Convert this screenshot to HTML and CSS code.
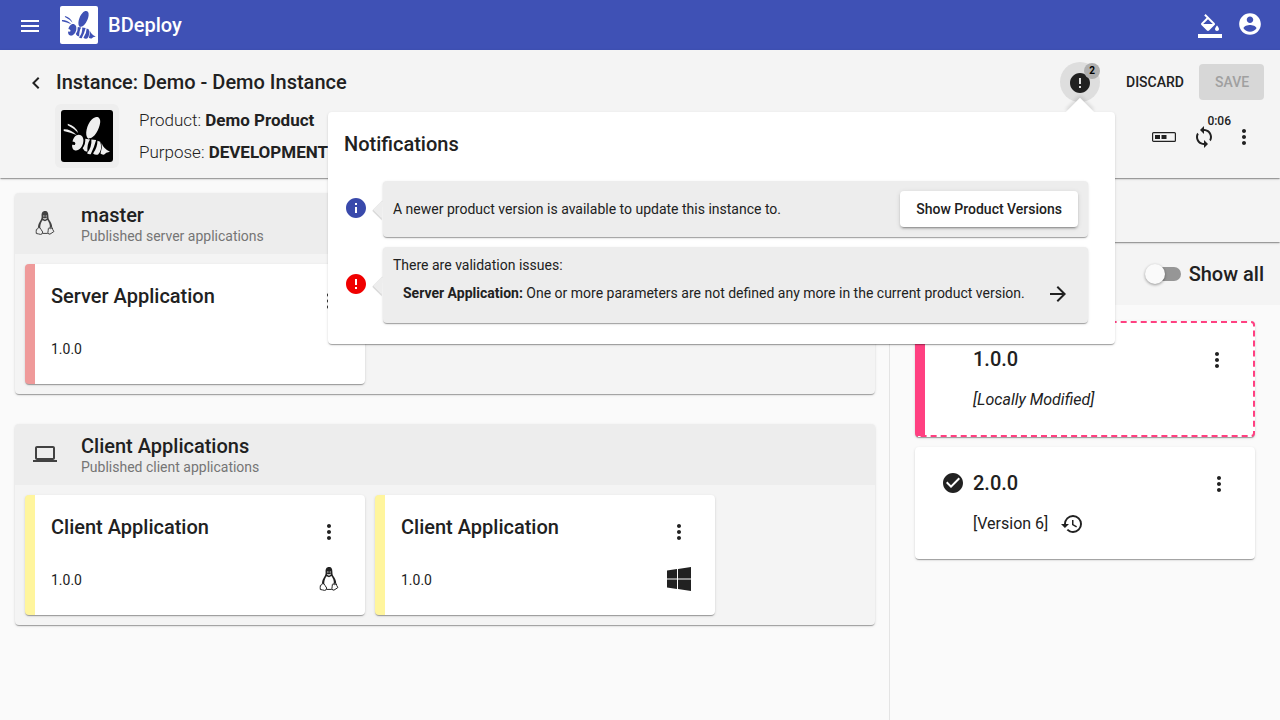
FILE: index.html
```html
<!DOCTYPE html>
<html lang="en">
<head>
<meta charset="utf-8">
<meta name="viewport" content="width=device-width, initial-scale=1">
<title>BDeploy</title>
<link rel="stylesheet" href="styles.css">
</head>
<body>
<svg class="defs" aria-hidden="true">
  <symbol id="bee" viewBox="0 0 154 154">
    <path d="M81 85C68 76 77 42 91 28C103 15 118 19 116 37C114 57 98 84 84 84Z"/>
    <path d="M8 57Q28 56 46 74Q28 66 8 62ZM20 41Q44 48 51 68Q38 54 20 45Z"/>
    <path d="M46 75C58 69 69 80 66 95C64 109 53 122 42 120C34 118 32 110 33 103L41 104Q45 98 40 95L34 93C36 86 40 78 46 75Z"/>
    <path d="M72 85L86 87Q77 100 78 124Q68 122 64 113Q73 102 72 85Z"/>
    <path d="M90 87L104 89Q98 112 88 131Q82 132 77 128Q92 108 90 87Z"/>
    <path d="M108 91L116 94Q124 116 110 132Q101 134 95 129Q108 111 108 91Z"/>
    <path d="M120 98Q126 115 145 124Q132 126 128 132Q121 133 117 129Q123 114 120 98Z"/>
  </symbol>
  <symbol id="menu" viewBox="0 0 24 24"><path d="M3 18h18v-2H3v2zm0-5h18v-2H3v2zm0-7v2h18V6H3z"/></symbol>
  <symbol id="more" viewBox="0 0 24 24"><path d="M12 8c1.100 0 2-.9 2-2s-.9-2-2-2-2 .9-2 2 .9 2 2 2zm0 2c-1.100 0-2 .9-2 2s.9 2 2 2 2-.9 2-2-.9-2-2-2zm0 6c-1.100 0-2 .9-2 2s.9 2 2 2 2-.9 2-2-.9-2-2-2z"/></symbol>
  <symbol id="error" viewBox="0 0 24 24"><path d="M12 2C6.480 2 2 6.480 2 12s4.480 10 10 10 10-4.480 10-10S17.520 2 12 2zm1 15h-2v-2h2v2zm0-4h-2V7h2v6z"/></symbol>
  <symbol id="info" viewBox="0 0 24 24"><path d="M12 2C6.480 2 2 6.480 2 12s4.480 10 10 10 10-4.480 10-10S17.520 2 12 2zm1 15h-2v-6h2v6zm0-8h-2V7h2v2z"/></symbol>
  <symbol id="tux" viewBox="0 0 24 24">
    <path d="M12 0C9.300 0 8.400 2.200 8.600 5C8.700 7 8.200 8.400 7 10.200C5.800 12 5.100 14 5 16L7.300 17.500C7 14 8 11.500 9.500 9.200L12 10.300L14.500 9C16.200 11.500 17.200 14 16.700 17L19.200 16.400C19.200 13.500 17.900 11 16.500 9.200C15.500 7.800 15.400 6.500 15.400 5C15.400 2 14.700 0 12 0ZM10.800 4.200Q11.600 4.300 11.500 5.500L10.200 5.600Q10.200 4.500 10.800 4.200ZM13.200 4.200Q13.900 4.400 13.900 5.600L12.600 5.500Q12.500 4.400 13.200 4.200ZM10.200 6.700L12 7.600L13.900 6.600L13.600 7.700L12 8.700L10.300 7.700Z" fill-rule="evenodd"/>
    <path d="M5.500 16.200Q7 16.400 8 18.400L9.700 21Q9.700 23.400 7.600 23.400Q5.600 22.900 3.300 22.500Q3 20.500 3.400 18.400Q5 18.300 5.500 16.200ZM15.400 17.500Q15.100 20 14.900 21.700Q15.400 23.600 17 23.100Q19 21.900 20.900 20.500Q19.500 18.800 19.300 16.800Q17.300 18.500 15.900 16.800ZM9.700 22.400L14.800 22.400" fill="none" stroke="currentColor"/>
  </symbol>
</svg>

<header class="appbar">
  <button class="icon-btn low" aria-label="Menu"><svg class="icon"><use href="#menu"/></svg></button>
  <span class="brand-logo"><svg><use href="#bee"/></svg></span>
  <span class="brand">BDeploy</span>
  <div class="appbar-actions">
    <button class="icon-btn low" aria-label="Theme"><svg class="icon" viewBox="0 0 24 24"><path d="M16.560 8.940L7.620 0 6.210 1.410l2.380 2.380-5.150 5.150a1.490 1.490 0 0 0 0 2.120l5.500 5.500c.29.29.68.44 1.060.44s.77-.15 1.060-.44l5.500-5.500c.59-.58.59-1.530 0-2.120zM5.210 10L10 5.210 14.790 10H5.210zM19 11.500s-2 2.170-2 3.500c0 1.100.9 2 2 2s2-.9 2-2c0-1.330-2-3.500-2-3.500zM0 20h24v4H0z"/></svg></button>
    <button class="icon-btn account" aria-label="Account"><svg class="icon icon-account" viewBox="0 0 24 24"><path d="M12 2C6.480 2 2 6.480 2 12s4.480 10 10 10 10-4.480 10-10S17.520 2 12 2zm0 3c1.660 0 3 1.340 3 3s-1.340 3-3 3-3-1.340-3-3 1.340-3 3-3zm0 14.200c-2.500 0-4.710-1.280-6-3.220.03-1.990 4-3.080 6-3.080 1.990 0 5.970 1.090 6 3.080-1.290 1.940-3.500 3.220-6 3.220z"/></svg></button>
  </div>
</header>

<section class="toolbar">
  <div class="toolbar-row">
    <button class="back" aria-label="Back"><svg class="icon" viewBox="0 0 24 24"><path d="M15.410 7.410L14 6l-6 6 6 6 1.410-1.410L10.830 12z"/></svg></button>
    <h1 class="title">Instance: Demo - Demo Instance</h1>
    <div class="actions">
      <div class="bell-anchor">
        <button class="icon-btn low bell" aria-label="Notifications"><svg class="icon"><use href="#error"/></svg><span class="badge">2</span></button>
        <div class="popup" role="dialog" aria-labelledby="popup-title">
          <h2 class="title popup-title" id="popup-title">Notifications</h2>
          <div class="notice">
            <svg class="icon blue"><use href="#info"/></svg>
            <div class="bubble bubble-row">
              <span>A newer product version is available to update this instance to.</span>
              <button class="btn raised">Show Product Versions</button>
            </div>
          </div>
          <div class="notice">
            <svg class="icon red"><use href="#error"/></svg>
            <div class="bubble bubble-list">
              <p class="issue-title">There are validation issues:</p>
              <div class="issue">
                <span><b>Server Application:</b> One or more parameters are not defined any more in the current product version.</span>
                <button class="icon-btn low" aria-label="Go to issue"><svg class="icon" viewBox="0 0 24 24"><path d="M12 4l-1.410 1.410L16.170 11H4v2h12.170l-5.580 5.590L12 20l8-8z"/></svg></button>
              </div>
            </div>
          </div>
        </div>
      </div>
      <button class="btn discard">DISCARD</button>
      <button class="btn save" disabled>SAVE</button>
    </div>
  </div>
  <div class="toolbar-row product-row">
    <div class="product-logo"><span><svg><use href="#bee"/></svg></span></div>
    <div class="product-info">
      <p>Product: <b>Demo Product</b></p>
      <p>Purpose: <b>DEVELOPMENT</b></p>
    </div>
    <div class="actions">
      <button class="icon-btn low" aria-label="Process state"><svg class="icon" viewBox="0 0 24 24"><rect x=".6" y="7.600" width="22.800" height="8.800" rx="1" fill="none" stroke="currentColor" stroke-width="1.200"/><path d="M3 10h5v4H3zM9.500 10h5v4h-5z"/></svg></button>
      <button class="icon-btn low sync" aria-label="Refresh"><svg class="icon" viewBox="0 0 24 24"><path d="M12 4V1L8 5l4 4V6c3.310 0 6 2.690 6 6 0 1.010-.25 1.970-.7 2.800l1.460 1.460A7.930 7.930 0 0 0 20 12c0-4.420-3.580-8-8-8zm0 14c-3.310 0-6-2.690-6-6 0-1.010.25-1.970.7-2.800L5.240 7.740A7.930 7.930 0 0 0 4 12c0 4.420 3.580 8 8 8v3l4-4-4-4v3z"/></svg><span class="timer">0:06</span></button>
      <button class="icon-btn low" aria-label="More"><svg class="icon"><use href="#more"/></svg></button>
    </div>
  </div>
</section>

<main class="content">
  <section class="nodes">
    <article class="group">
      <header class="group-head">
        <svg class="icon"><use href="#tux"/></svg>
        <div>
          <h2 class="title">master</h2>
          <p class="subtitle">Published server applications</p>
        </div>
      </header>
      <div class="cards">
        <div class="card card-red">
          <div class="card-top"><h3 class="title">Server Application</h3><button class="icon-btn" aria-label="More"><svg class="icon"><use href="#more"/></svg></button></div>
          <div class="card-bottom"><span>1.0.0</span></div>
        </div>
      </div>
    </article>
    <article class="group">
      <header class="group-head">
        <svg class="icon" viewBox="0 0 24 24"><path d="M20 18c1.100 0 2-.9 2-2V6c0-1.100-.9-2-2-2H4c-1.100 0-2 .9-2 2v10c0 1.100.9 2 2 2H0v2h24v-2h-4zM4 6h16v10H4V6z"/></svg>
        <div>
          <h2 class="title">Client Applications</h2>
          <p class="subtitle">Published client applications</p>
        </div>
      </header>
      <div class="cards">
        <div class="card card-yellow">
          <div class="card-top"><h3 class="title">Client Application</h3><button class="icon-btn" aria-label="More"><svg class="icon"><use href="#more"/></svg></button></div>
          <div class="card-bottom"><span>1.0.0</span><svg class="icon"><use href="#tux"/></svg></div>
        </div>
        <div class="card card-yellow">
          <div class="card-top"><h3 class="title">Client Application</h3><button class="icon-btn" aria-label="More"><svg class="icon"><use href="#more"/></svg></button></div>
          <div class="card-bottom"><span>1.0.0</span><svg class="icon" viewBox="0 0 24 24"><path d="M0 3.500L10 2v9.500H0zM11 1.900L24 0v11.500H11zM0 12.500h10V22L0 20.500zM11 12.500h13V24l-13-1.900z"/></svg></div>
        </div>
      </div>
    </article>
  </section>

  <aside class="side">
    <div class="side-head"></div>
    <div class="side-filter">
      <input class="toggle" type="checkbox" id="show-all">
      <label class="title" for="show-all">Show all</label>
    </div>
    <div class="versions">
      <div class="version modified">
        <div class="version-main">
          <h3 class="title">1.0.0</h3>
          <p class="version-tag"><i>[Locally Modified]</i></p>
        </div>
        <button class="icon-btn low" aria-label="More"><svg class="icon"><use href="#more"/></svg></button>
      </div>
      <div class="version">
        <svg class="icon" viewBox="0 0 24 24"><path d="M12 2C6.480 2 2 6.480 2 12s4.480 10 10 10 10-4.480 10-10S17.520 2 12 2zm-2 15l-5-5 1.410-1.410L10 14.170l7.590-7.590L19 8l-9 9z"/></svg>
        <div class="version-main">
          <h3 class="title">2.0.0</h3>
          <p class="version-tag">[Version 6] <svg class="icon" viewBox="0 0 24 24"><path d="M13 3a9 9 0 0 0-9 9H1l3.890 3.890.07.14L9 12H6c0-3.870 3.130-7 7-7s7 3.130 7 7-3.130 7-7 7c-1.930 0-3.680-.79-4.940-2.060l-1.420 1.420A8.954 8.954 0 0 0 13 21a9 9 0 0 0 0-18zm-1 5v5l4.280 2.540.72-1.210-3.500-2.080V8H12z"/></svg></p>
        </div>
        <button class="icon-btn low" aria-label="More"><svg class="icon"><use href="#more"/></svg></button>
      </div>
    </div>
  </aside>
</main>
</body>
</html>
```
FILE: styles.css
```css
* { box-sizing: border-box; }

:root {
  --text: #212121;
  --shadow: 0 2px 1px -1px rgba(0, 0, 0, .2), 0 1px 1px 0 rgba(0, 0, 0, .14), 0 1px 3px 0 rgba(0, 0, 0, .12);
}

body {
  margin: 0;
  min-height: 100vh;
  display: flex;
  flex-direction: column;
  background: #fafafa;
  color: var(--text);
  font: 14px/20px Roboto, "Liberation Sans", sans-serif;
}

h1, h2, h3, p { margin: 0; }
b { font-weight: 700; }

button {
  font: inherit;
  color: inherit;
  background: none;
  border: 0;
  padding: 0;
}

.defs { position: absolute; width: 0; height: 0; }
.icon { width: 24px; height: 24px; fill: currentColor; flex: none; display: block; }
.title { font-size: 20px; line-height: 32px; font-weight: 500; }

.icon-btn {
  width: 40px;
  height: 40px;
  flex: none;
  display: flex;
  align-items: center;
  justify-content: center;
  border-radius: 50%;
}
.low { padding-top: 2px; }

.btn {
  height: 36px;
  padding: 0 16px;
  border-radius: 4px;
  font-weight: 500;
  white-space: nowrap;
}

.appbar {
  height: 50px;
  display: flex;
  align-items: center;
  padding: 0 10px;
  background: #3f51b5;
  color: #fff;
}

.brand-logo {
  width: 38px;
  height: 38px;
  margin: 0 10px;
  border-radius: 2px;
  background: #fff;
  color: #3f51b5;
}
.brand-logo svg { width: 38px; height: 38px; fill: currentColor; display: block; }
.brand { font-size: 20px; font-weight: 500; }
.appbar-actions { margin-left: auto; display: flex; }
.account { align-items: flex-start; padding-top: 6px; }
.icon-account { width: 26px; height: 26px; }

.toolbar {
  position: relative;
  z-index: 2;
  display: flex;
  flex-direction: column;
  gap: 2px;
  padding: 12px 16px 10px 24px;
  background: #f4f4f4;
  box-shadow: var(--shadow);
}
.toolbar-row { display: flex; align-items: center; gap: 8px; }
.toolbar-row .title { line-height: 40px; }
.back { padding-top: 2px; }
.actions { margin-left: auto; display: flex; align-items: center; }

.bell-anchor { position: relative; margin-right: 10px; }
.bell { position: relative; background: #dedede; }
.badge {
  position: absolute;
  top: 1px;
  right: 0;
  width: 16px;
  height: 16px;
  border-radius: 50%;
  background: #b0b0b0;
  color: #000;
  font-size: 10px;
  line-height: 16px;
  font-weight: 700;
  text-align: center;
}
.discard { width: 89px; }
.save { width: 65px; background: #d7d7d7; color: #a0a0a0; }

.product-row { padding-left: 31px; gap: 20px; }
.product-logo {
  width: 64px;
  height: 64px;
  padding: 6px;
  border-radius: 6px;
  background: #eee;
}
.product-logo span { display: block; border-radius: 3px; background: #000; color: #eee; }
.product-logo svg { display: block; width: 52px; height: 52px; fill: currentColor; }
.product-info { font-size: 17px; line-height: 32px; font-weight: 300; }
.sync { position: relative; }
.timer {
  position: absolute;
  top: -5px;
  right: -7px;
  font-size: 12px;
  line-height: 20px;
  font-weight: 500;
}

.popup {
  position: absolute;
  top: 50px;
  right: -15px;
  width: 787px;
  padding: 16px 27px 21px 16px;
  border-radius: 4px;
  background: #fff;
  box-shadow: var(--shadow);
}
.popup::before {
  content: "";
  position: absolute;
  top: -10px;
  right: 25px;
  width: 20px;
  height: 20px;
  background: #fff;
  transform: rotate(45deg);
  box-shadow: -2px -2px 4px rgba(0, 0, 0, .12);
  clip-path: polygon(-6px -6px, 26px -6px, -6px 26px);
}
.toolbar-row .popup-title { line-height: 32px; margin-bottom: 21px; }

.notice { display: flex; gap: 15px; }
.notice + .notice { margin-top: 10px; }
.notice > .icon { align-self: center; margin-bottom: 2px; }
.blue { color: #3949ab; }
.red { color: #f00000; }
.bubble {
  position: relative;
  flex: 1;
  padding: 10px;
  border-radius: 4px;
  background: #ededed;
  box-shadow: var(--shadow);
}
.bubble::before {
  content: "";
  position: absolute;
  top: 50%;
  left: -7px;
  width: 14px;
  height: 14px;
  margin-top: -6px;
  background: #ededed;
  transform: rotate(45deg);
  box-shadow: 0 1px 1px rgba(0, 0, 0, .2);
  clip-path: polygon(-1px -1px, 14px 16px, -1px 16px);
}
.bubble-row { display: flex; align-items: center; justify-content: space-between; }
.bubble-list { padding: 8px 10px 12px; }
.raised { background: #fff; box-shadow: 0 3px 1px -2px rgba(0, 0, 0, .2), 0 2px 2px 0 rgba(0, 0, 0, .14), 0 1px 5px 0 rgba(0, 0, 0, .12); }
.issue { display: flex; align-items: center; justify-content: space-between; height: 36px; padding-left: 10px; }

.content { flex: 1; display: flex; }
.nodes {
  flex: 1;
  display: flex;
  flex-direction: column;
  gap: 30px;
  padding: 15px 14px 15px 15px;
}
.group { border-radius: 4px; background: #f4f4f4; box-shadow: var(--shadow); overflow: hidden; }
.group-head {
  display: flex;
  align-items: center;
  gap: 24px;
  padding: 11px 18px 8px;
  background: #ededed;
}
.group-head .icon { color: #424242; margin-bottom: 4px; }
.group-head .title { line-height: 22px; }
.subtitle { color: #757575; }
.cards { display: flex; flex-wrap: wrap; gap: 10px; padding: 10px; }
.card {
  width: 340px;
  min-height: 120px;
  padding: 16px 16px 23px;
  border-left: 10px solid;
  border-radius: 4px;
  background: #fff;
  box-shadow: var(--shadow);
}
.card-red { border-left-color: #ef9a9a; }
.card-yellow { border-left-color: #fff59d; }
.card-top { display: flex; justify-content: space-between; }
.card-top .icon-btn { height: 42px; }
.card-bottom {
  display: flex;
  align-items: center;
  justify-content: space-between;
  height: 24px;
  margin-top: 14px;
  padding-right: 8px;
}
.card-bottom span { padding-top: 2px; }

.side { width: 391px; border-left: 1px solid #e4e4e4; }
.side-head { position: relative; height: 64px; background: #f4f4f4; box-shadow: var(--shadow); }
.side-filter {
  display: flex;
  align-items: center;
  justify-content: flex-end;
  gap: 8px;
  height: 63px;
  padding: 0 16px;
  background: #f4f4f4;
}
.toggle {
  appearance: none;
  position: relative;
  width: 32px;
  height: 14px;
  margin: 0;
  border-radius: 7px;
  background: #969696;
}
.toggle::before {
  content: "";
  position: absolute;
  top: -3px;
  left: -4px;
  width: 20px;
  height: 20px;
  border-radius: 50%;
  background: #fafafa;
  box-shadow: 0 1px 3px rgba(0, 0, 0, .4);
}
.toggle:checked::before { left: 16px; }

.versions { display: flex; flex-direction: column; gap: 10px; padding: 16px 25px; }
.version {
  display: flex;
  align-items: flex-start;
  gap: 8px;
  min-height: 112px;
  padding: 16px 16px 14px 26px;
  border-radius: 4px;
  background: #fff;
  box-shadow: var(--shadow);
}
.version > .icon { margin: 8px 0; }
.version .title { line-height: 40px; }
.version-main { flex: 1; }
.version-tag { display: flex; align-items: center; gap: 12px; font-size: 16px; line-height: 24px; padding: 9px 0; }
.modified { padding-left: 48px; border: 2px dashed #ff4081; border-left: 10px solid #ff4081; }
```
